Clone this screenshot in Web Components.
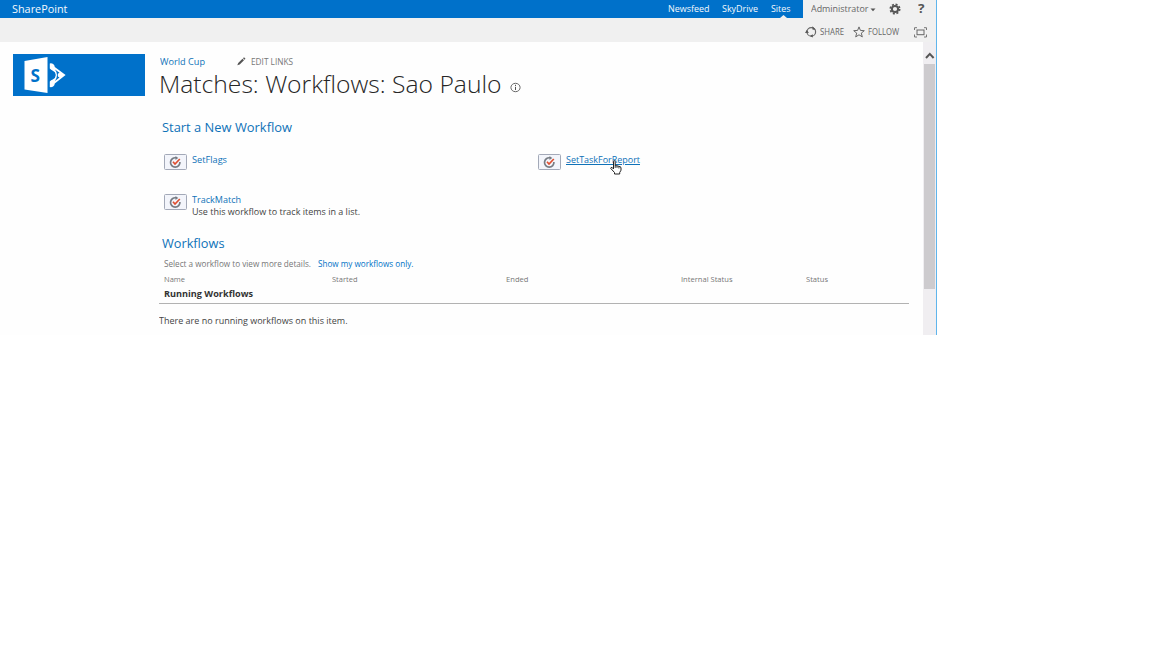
<!DOCTYPE html>
<html lang="en">
<head>
<meta charset="utf-8">
<title>SharePoint</title>
<style>
html,body{margin:0;background:#fff;overflow:hidden}
body{font-family:"Open Sans","Noto Sans",sans-serif;color:#444}
</style>
</head>
<body>
<sp-page></sp-page>
<script>
// One line of text, condensed or extended to the width in "w".
customElements.define('ui-text', class extends HTMLElement {
  constructor() {
    super();
    this.attachShadow({mode: 'open'}).innerHTML = `<style>
      :host{display:block;flex:none;white-space:nowrap}
      span{display:inline-block;transform-origin:0 50%;vertical-align:top;text-decoration:var(--line,none)}
      </style><span><slot></slot></span>`;
  }
  connectedCallback() {
    const w = +this.getAttribute('w'), s = +this.getAttribute('s'), h = +this.getAttribute('h') || 14;
    this.style.cssText += `;width:${w}px;height:${h}px;font-size:${s}px;line-height:${h}px`;
    const span = this.shadowRoot.querySelector('span');
    span.style.transform = `scaleX(${w / span.offsetWidth})`;
    const r = span.getBoundingClientRect().width;
    if (r) span.style.transform = `scaleX(${w / span.offsetWidth * w / r})`;
  }
});
const define = (name, html) => customElements.define(name, class extends HTMLElement {
  constructor() {
    super();
    this.attachShadow({mode: 'open'}).innerHTML = html;
  }
});

define('sp-suite-bar', `<style>
  :host{display:flex;height:18px;background:#0071ca;color:#f4f9fd}
  .brand{margin-left:12px;flex:1;padding-top:2px}
  nav{display:flex;padding:2px 13px 0 0;position:relative}
  nav ui-text+ui-text{margin-left:12.5px}
  .notch{position:absolute;right:16.5px;bottom:0}
  .user{width:133px;box-sizing:border-box;padding:2px 0 0 8px;display:flex;background:#f0f0f0;color:#666}
  svg{display:block;flex:none}
  </style>
  <div class="brand"><ui-text w="55.5" s="11">SharePoint</ui-text></div>
  <nav><ui-text w="41.5" s="9.4">Newsfeed</ui-text><ui-text w="36" s="9.4">SkyDrive</ui-text><ui-text w="19.5" s="9.4">Sites</ui-text>
  <svg class="notch" width="7" height="3"><path d="M0 3 3.5 0 7 3z" fill="#f0f0f0"/></svg></nav>
  <div class="user"><ui-text w="57.5" s="9.4">Administrator</ui-text>
  <svg width="6" height="14" style="margin-left:1px"><path d="M.5 6.5h5L3 9.3z" fill="#555"/></svg>
  <svg width="12" height="12" viewBox="0 0 12 12" style="margin:1px 0 0 13.500px"><g stroke="#555" fill="none"><circle cx="6" cy="6" r="3.1" stroke-width="2"/><circle cx="6" cy="6" r="4.7" stroke-width="1.6" stroke-dasharray="2 1.69"/></g></svg>
  <ui-text w="6.5" s="12" style="margin:-.5px 0 0 17px;font-weight:700;color:#555">?</ui-text></div>`);

define('sp-ribbon', `<style>
  :host{display:flex;justify-content:flex-end;height:23.5px;padding:7px 9px 0 0;box-sizing:border-box;background:#f0f0f0;color:#666}
  svg{display:block;flex:none}
  </style>
  <svg width="12" height="12" viewBox="0 0 12 12" style="margin-top:1px"><g fill="none" stroke="#666" stroke-width="1.2"><ellipse cx="6.300" cy="5.900" rx="4.300" ry="4.200"/></g><g fill="#555"><path d="M7.300 .300 10.800 3.600 7.600 3.800zM7.800 8.200v3.300L5 10zM0 6.900 1.700 4 4 6.700z"/></g></svg>
  <ui-text w="24" s="8.6" style="margin:0 0 0 2.500px">SHARE</ui-text>
  <svg width="12" height="12" viewBox="0 0 12 12" style="margin:1px 0 0 9px"><path d="M6 .9 7.4 4.4 11.3 4.7 8.3 7.1 9.3 10.9 6 8.8 2.7 10.9 3.7 7.1.7 4.7 4.6 4.4z" fill="none" stroke="#666"/></svg>
  <ui-text w="31" s="8.6" style="margin:0 0 0 3px">FOLLOW</ui-text>
  <svg width="13" height="11" viewBox="0 0 13 11" style="margin:1.5px 0 0 15.5px"><path d="M.5 3V.7H3M10 .7h2.500V3M12.500 7.500V10H10M3 10H.5V7.500" fill="none" stroke="#777"/><rect x="3" y="3" width="7" height="4.700" fill="none" stroke="#666"/></svg>`);

define('sp-logo', `<style>
  :host{display:block;width:132px;height:42px;background:#0071ca;font-weight:700;color:#0071ca}
  svg{display:block}
  </style>
  <svg width="132" height="42" viewBox="0 0 132 42"><path d="M11.500 7 34.500 3v36L11.500 35.500z" fill="#fff"/>
  <path d="M36.800 9.500a4 4 0 0 1 5 3.500L52.600 21 41.800 29.500a4 4 0 0 1-5 3.500V27.500Q38 26 39.800 25.500 42.500 24.500 42.800 21 42.500 17.800 39.800 16.700 38 16 36.800 14.500z" fill="#fff"/>
  <path d="M36.800 16Q41 17 41 21T36.800 26z" fill="#0071ca"/>
  <path d="M42 15.500 46.500 18.700Q44.700 19 44.700 21T46.500 23.500L42 27Q44 24 44 21T42 15.500z" fill="#0071ca"/>
  <text x="17.500" y="27.500" font-size="18.500" textLength="9.500" lengthAdjust="spacingAndGlyphs" fill="#0071ca">S</text></svg>`);

define('sp-workflow', `<style>
  :host{display:flex;height:40px}
  i{display:block;box-sizing:border-box;width:23px;height:16px;border:1px solid #a3a9b8;border-radius:1.500px;background:#f3f5fb;margin:2px 5px 0 0;flex:none}
  svg{display:block;margin:1px auto 0}
  div{padding-top:1.500px}
  </style><i><svg width="13" height="13" viewBox="0 0 13 13"><path d="M7 1.800A4.700 4.700 0 1 0 10.900 6" fill="none" stroke="#777c84" stroke-width="1.700"/><path d="M6.500 0 9.300 2.100 6.500 4z" fill="#777c84"/><path d="M4 5.800 6 8 10.800 3" fill="none" stroke="#df4f31" stroke-width="1.700"/></svg></i>
  <div><slot></slot></div>`);

define('sp-scrollbar', `<style>
  :host{display:block;width:13px;background:#f0eef1;flex:none}
  svg{display:block;padding:8.500px 0 0 2px;height:13.500px}
  div{width:11px;height:225px;margin-left:1px;background:#cdcbce}
  </style><svg width="10" height="12"><path d="M1 7.500 4.800 3.400 8.600 7.500" fill="none" stroke="#555" stroke-width="2"/></svg><div></div>`);

define('sp-page', `<style>
  :host{display:block;width:936px;height:335px;border-right:1px solid #5fb5ec;background:#fff;overflow:hidden}
  .body{display:flex;height:293.500px;background:#fefefe}
  sp-logo{margin:12.500px 15px 0 12.500px;flex:none}
  main{flex:1;min-width:0}
  .row{display:flex}
  .blue{color:#0f72b8}
  svg{display:block;flex:none}
  .grid{display:grid;grid-template-columns:374px 1fr;margin:15px 0 0 4.500px}
  .link{--line:underline}
  .hover{position:relative}
  .hand{position:absolute;left:44px;top:6.500px}
  .cols{display:grid;grid-template-columns:168px 174px 174.500px 125.500px 1fr;margin:1px 0 0 4.500px;color:#777}
  .group{border-bottom:1px solid #b2b2b2;width:750px;box-sizing:border-box;height:17px;padding-left:4.500px;margin:.5px 0 0 -.5px;font-weight:700;color:#333}
  </style>
  <sp-suite-bar></sp-suite-bar><sp-ribbon></sp-ribbon>
  <div class="body"><sp-logo></sp-logo>
  <main>
    <div class="row" style="padding-top:13px"><ui-text class="blue" w="45" s="9.300">World Cup</ui-text>
      <svg width="9" height="9" viewBox="0 0 9 9" style="margin:2.500px 5px 0 32px"><path d="M.3 8.300 1.200 5.900 5.500 1.700 7 3.200 2.700 7.400zM6 1.200 7 .3 8.500 1.800 7.500 2.800z" fill="#555"/></svg>
      <ui-text w="42" s="8.900" style="color:#777;padding-top:.5px">EDIT LINKS</ui-text></div>
    <div class="row" style="margin-top:-1px"><ui-text w="342.500" h="32" s="24" style="font-weight:300;color:#262626;margin-left:-.5px">Matches: Workflows: Sao Paulo</ui-text>
      <svg width="11" height="11" viewBox="0 0 11 11" style="margin:14px 0 0 8px"><ellipse cx="5.500" cy="5.500" rx="4.600" ry="4.200" fill="none" stroke="#666"/><path d="M5.500 4.800V8M5.500 2.800V4" stroke="#555"/></svg></div>
    <ui-text class="blue" w="130" h="18" s="12.300" style="margin:19px 0 0 2.500px">Start a New Workflow</ui-text>
    <div class="grid">
      <sp-workflow><ui-text class="blue" w="35" h="12" s="9.200">SetFlags</ui-text></sp-workflow>
      <sp-workflow><div class="hover"><ui-text class="blue link" w="74" h="12" s="9.200">SetTaskForReport</ui-text>
        <svg class="hand" width="12" height="15" viewBox="0 0 12 15"><path d="M3.500 9V1.700Q3.500.6 4.300.6T5.200 1.700V6Q5.800 5 7 6 8 5.400 8.900 6.500 11 6.200 11 8v2.200L9.700 12.500V14H4.500V12.500L.8 8.500Q.8 7 2.200 7.500z" fill="#fff" stroke="#222"/><path d="M5.200 6v2M7 6v2M8.900 6.500v2" stroke="#222" stroke-width=".8"/></svg></div></sp-workflow>
      <sp-workflow><ui-text class="blue" w="49" h="12" s="9.200">TrackMatch</ui-text><ui-text w="168" h="12" s="9.200">Use this workflow to track items in a list.</ui-text></sp-workflow>
    </div>
    <ui-text class="blue" w="62.500" h="18" s="12.300" style="margin:3px 0 0 2.500px">Workflows</ui-text>
    <div class="row" style="margin:4px 0 0 4.500px"><ui-text w="147" s="8.300" style="color:#777">Select a workflow to view more details.</ui-text><ui-text w="95.500" s="8.300" style="margin-left:7px;color:#0072c6;font-weight:500">Show my workflows only.</ui-text></div>
    <div class="cols"><ui-text w="21" s="8">Name</ui-text><ui-text w="25.500" s="8">Started</ui-text><ui-text w="22.500" s="8">Ended</ui-text><ui-text w="51.500" s="8">Internal Status</ui-text><ui-text w="22" s="8">Status</ui-text></div>
    <div class="group"><ui-text w="89" s="9.200">Running Workflows</ui-text></div>
    <ui-text w="188.500" s="9.200" style="margin:10px 0 0 -.5px">There are no running workflows on this item.</ui-text>
  </main>
  <sp-scrollbar></sp-scrollbar></div>`);
</script>
</body>
</html>
